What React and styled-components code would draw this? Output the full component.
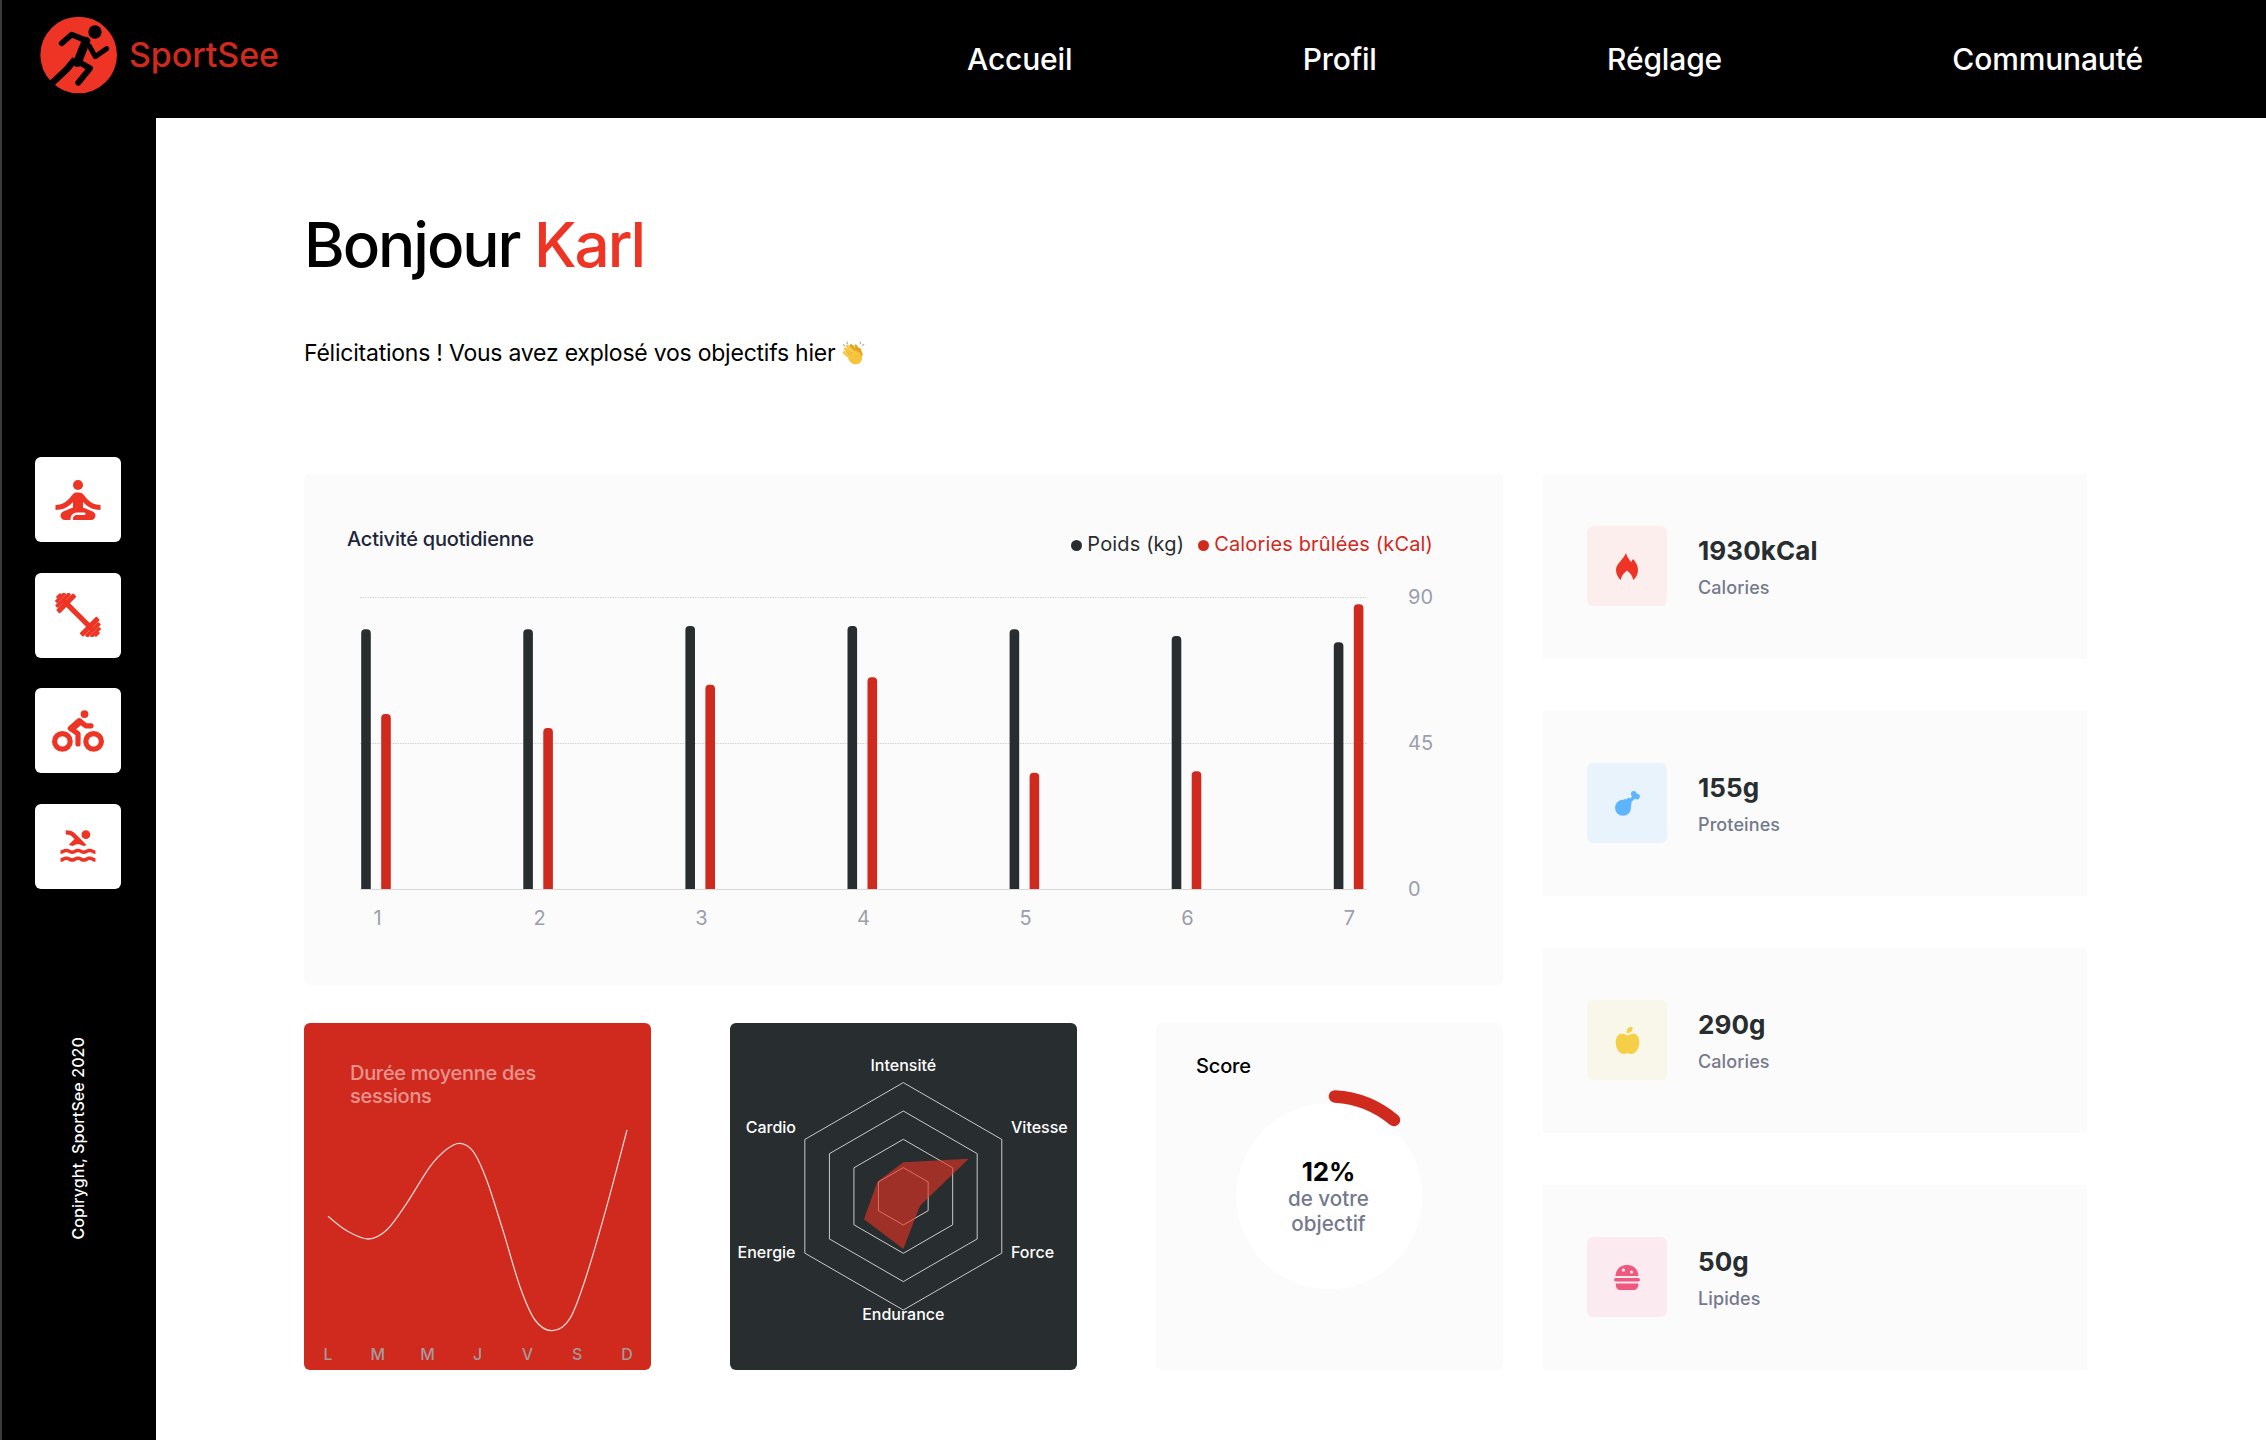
import React from 'react';
import styled, { createGlobalStyle } from 'styled-components';
import { MdSelfImprovement, MdPool } from 'react-icons/md';
import { FaBiking, FaAppleAlt } from 'react-icons/fa';

const Global = createGlobalStyle`
  html, body { margin: 0; padding: 0; background: #fff; }
  body { font-family: Inter, "Liberation Sans", sans-serif; }
  * { box-sizing: border-box; }
`;

const RED = '#D0291D';
const DARK = '#282D30';

const Page = styled.div`
  width: 2266px;
  height: 1440px;
  display: flex;
  flex-direction: column;
  overflow: hidden;
  border-left: 2px solid #3a3a3a;
`;
const TopBar = styled.header`
  height: 118px;
  flex: none;
  background: #000;
  display: flex;
  align-items: center;
  padding: 0 123px 0 38px;
  justify-content: space-between;
`;
const Brand = styled.div`
  display: flex;
  align-items: center;
  gap: 9px;
  margin-top: -7px;
`;
const BrandName = styled.span`
  color: ${RED};
  font-size: 34px;
  font-weight: 500;
  letter-spacing: -0.1px;
  margin-top: -2px;
`;
const Nav = styled.nav`
  width: 1176px;
  display: flex;
  justify-content: space-between;
`;
const NavLink = styled.a`
  color: #fff;
  font-size: 30px;
  font-weight: 500;
  line-height: 36px;
  letter-spacing: -0.15px;
`;
const Body = styled.div`
  flex: 1;
  display: flex;
  min-height: 0;
`;
const SideBar = styled.aside`
  width: 154px;
  flex: none;
  background: #000;
  display: flex;
  flex-direction: column;
  align-items: center;
  padding: 339px 0 0 0;
`;
const SideList = styled.div`
  display: flex;
  flex-direction: column;
  gap: 30.5px;
  margin-left: -2px;
`;
const SideButton = styled.a`
  width: 86px;
  height: 85px;
  border-radius: 6px;
  background: #fff;
  color: #EE3424;
  display: flex;
  align-items: center;
  justify-content: center;
`;
const Copy = styled.div`
  writing-mode: vertical-rl;
  transform: rotate(180deg);
  color: #fff;
  font-size: 16px;
  font-weight: 500;
  line-height: 20px;
  letter-spacing: 0.1px;
  margin-top: 148px;
  margin-left: -2px;
  white-space: nowrap;
`;
const Main = styled.main`
  flex: 1;
  background: #fff;
  padding: 89px 0 0 148px;
`;
const Title = styled.h1`
  margin: 0;
  font-size: 62px;
  font-weight: 500;
  line-height: 76px;
  color: #000;
  letter-spacing: -2.05px;
`;
const Accent = styled.span`
  color: #EE3424;
`;
const Sub = styled.p`
  margin: 55px 0 106px;
  font-size: 23px;
  line-height: 30px;
  font-weight: 400;
  letter-spacing: -0.23px;
  color: #000;
  display: flex;
  align-items: center;
  gap: 6px;
`;
const Dashboard = styled.div`
  display: grid;
  grid-template-columns: 1199px 544px;
  column-gap: 40px;
`;
const LeftCol = styled.div`
  display: flex;
  flex-direction: column;
  gap: 38px;
`;
const ActivityCard = styled.section`
  height: 511px;
  background: #FBFBFB;
  border-radius: 5px;
`;
const ActivityHead = styled.div`
  height: 100px;
  padding: 0 70px 0 43px;
  display: flex;
  justify-content: space-between;
`;
const ActivityTitle = styled.h2`
  margin: 53px 0 0;
  font-size: 20px;
  line-height: 24px;
  font-weight: 500;
  letter-spacing: -0.2px;
  color: #20253A;
`;
const Legend = styled.div`
  margin-top: 58px;
  display: flex;
  gap: 14px;
  height: 24px;
`;
const LegendItem = styled.span`
  display: flex;
  align-items: center;
  gap: 5px;
  font-size: 20px;
  line-height: 24px;
  letter-spacing: 0.15px;
  color: ${p => p.$color};
  &::before {
    content: '';
    width: 11px;
    height: 11px;
    border-radius: 50%;
    background: ${p => p.$color};
    margin-top: 2px;
  }
`;
const ChartSvg = styled.svg`
  display: block;
`;
const Row = styled.div`
  display: grid;
  grid-template-columns: repeat(3, 347px);
  justify-content: space-between;
`;
const Tile = styled.section`
  position: relative;
  height: 347px;
  border-radius: 6px;
  background: ${p => p.$bg};
  overflow: hidden;
`;
const DurationTitle = styled.h3`
  margin: 0;
  padding: 39px 0 0 46px;
  width: 300px;
  font-size: 20px;
  line-height: 23px;
  font-weight: 500;
  letter-spacing: -0.3px;
  color: rgba(255, 255, 255, 0.5);
`;
const OverSvg = styled.svg`
  position: absolute;
  inset: 0;
`;
const Days = styled.div`
  position: absolute;
  left: 0;
  right: 0;
  bottom: 6px;
  padding: 0 12px;
  display: flex;
  justify-content: space-between;
`;
const Day = styled.span`
  width: 24px;
  text-align: center;
  font-size: 16px;
  line-height: 20px;
  font-weight: 500;
  color: #A59A9C;
`;
const ScoreTitle = styled.h3`
  position: relative;
  margin: 0;
  padding: 31px 0 0 40px;
  font-size: 20px;
  line-height: 24px;
  font-weight: 500;
  letter-spacing: -0.15px;
  color: #000;
`;
const ScoreText = styled.div`
  position: absolute;
  left: 0;
  right: 2px;
  top: 133px;
  text-align: center;
`;
const ScoreValue = styled.div`
  font-size: 26px;
  line-height: 32px;
  font-weight: 700;
  letter-spacing: -0.2px;
  color: #000;
`;
const ScoreLabel = styled.div`
  font-size: 20.6px;
  line-height: 24.5px;
  font-weight: 500;
  color: #74798C;
  margin-top: -1px;
`;
const RightCol = styled.div`
  display: flex;
  flex-direction: column;
  gap: 52px;
`;
const Stat = styled.div`
  height: 185px;
  background: #FBFBFB;
  display: flex;
  align-items: flex-start;
  gap: 31px;
  padding: 52px 44px 0;
`;
const StatIcon = styled.div`
  width: 80px;
  height: 80px;
  border-radius: 6px;
  background: ${p => p.$bg};
  color: ${p => p.$color};
  display: flex;
  align-items: center;
  justify-content: center;
`;
const StatBody = styled.div`
  display: flex;
  flex-direction: column;
  gap: 10px;
  margin-top: 9px;
`;
const StatValue = styled.div`
  font-size: 26px;
  line-height: 32px;
  font-weight: 700;
  letter-spacing: 0.1px;
  color: ${DARK};
`;
const StatLabel = styled.div`
  font-size: 18px;
  line-height: 22px;
  font-weight: 500;
  letter-spacing: 0.1px;
  color: #74798C;
`;

const Logo = () => (
  <svg width="80" height="80" viewBox="120 50 240 240">
    <circle cx="236" cy="167" r="115" fill="#EE3424" />
    <circle cx="285" cy="98" r="20" fill="#000" />
    <g fill="none" stroke="#000" strokeLinecap="round" strokeLinejoin="round">
      <path d="M185 132 L215 106 L262 125" strokeWidth="17" />
      <path d="M258 125 L232 190" strokeWidth="26" />
      <path d="M268 140 L286 172 L320 148" strokeWidth="15" />
      <path d="M232 185 L270 207 L235 250" strokeWidth="18" />
      <path strokeLinecap="butt" d="M225 180 L200 210 L145 262" strokeWidth="20" />
    </g>
  </svg>
);

const Barbell = () => (
  <svg width="46" height="44" viewBox="0 0 46 44" fill="currentColor">
    <g transform="translate(23 22) rotate(45)">
      <rect x="-20" y="-2.6" width="40" height="5.2" />
      {[1, -1].map(s => (
        <g key={s} transform={`scale(${s} 1)`}>
          <rect x="14" y="-12" width="5" height="24" rx="1" />
          <rect x="19" y="-9.5" width="4" height="19" rx="1" />
          <rect x="23" y="-6.5" width="3.4" height="13" rx="1" />
          <rect x="26" y="-3" width="2.4" height="6" rx="1" />
        </g>
      ))}
    </g>
  </svg>
);

const Clap = () => (
  <svg width="24" height="24" viewBox="0 0 24 24">
    <g fill="none" stroke="#A8A8A8" strokeWidth="1.1" strokeLinecap="round">
      <path d="M2.5 3.5 L3.6 4.8" /><path d="M6 0.8 L6.4 2.6" /><path d="M19.6 1 L19.2 2.8" /><path d="M22.8 3.4 L21.4 4.4" />
    </g>
    <g fill="none" stroke="#E3A21C" strokeLinecap="round">
      <path d="M10 4.6 L16 11" strokeWidth="3" />
      <path d="M14.6 4.8 L18.6 11" strokeWidth="2.6" />
      <path d="M18.4 8 L20.4 14" strokeWidth="2.6" />
    </g>
    <ellipse cx="14" cy="16.4" rx="7.4" ry="6.6" transform="rotate(40 14 16.4)" fill="#F7C23E" />
    <g fill="none" stroke="#F9C842" strokeLinecap="round">
      <path d="M4.4 8 L11 14.4" strokeWidth="3.1" />
      <path d="M6.6 5.2 L13 12" strokeWidth="3.1" />
      <path d="M3.4 11.6 L9.6 17" strokeWidth="3.1" />
    </g>
    <g fill="none" stroke="#E3A21C" strokeWidth="0.7" strokeLinecap="round">
      <path d="M6.4 8 L11.2 12.8" />
      <path d="M5 10 L9.6 14.4" />
    </g>
  </svg>
);

const Flame = () => (
  <svg width="22" height="27" viewBox="0 0 22 27" fill="currentColor">
    <path d="M10 0 C11 4 13 6 15 9 L17 6 C20 9 22 13 22 17 C22 21 20 25 17 27 C17 23 14 20 11 17.5 C8 20 5 23 5 27 C2 25 0 21 0 17 C0 11 7 7 10 0 Z" />
  </svg>
);

const Drumstick = () => (
  <svg width="25" height="25" viewBox="0 0 25 25" fill="currentColor">
    <circle cx="8" cy="16.8" r="8" />
    <path d="M5 10.5 L10 8 L11.4 8.6 L13 6.6 L15 7.4 L16.6 13 L14 20 Z" />
    <path d="M13 12 L20 5" fill="none" stroke="currentColor" strokeWidth="3.6" />
    <circle cx="18.8" cy="2.9" r="2.8" />
    <circle cx="22" cy="5.6" r="2.8" />
  </svg>
);

const Burger = () => (
  <svg width="26" height="25" viewBox="0 0 26 25">
    <path fill="currentColor" d="M1.6 11 C1.6 4 7 0 13 0 C19 0 24.4 4 24.4 11 Z" />
    <circle cx="9.4" cy="5.2" r="1.6" fill="#FBEAEF" />
    <circle cx="17.6" cy="7" r="1.6" fill="#FBEAEF" />
    <rect fill="currentColor" x="0" y="13" width="26" height="3.6" rx="1.8" />
    <path fill="currentColor" d="M1.8 18.6 H24.2 V20 C24.2 23 22 25 19.6 25 H6.4 C4 25 1.8 23 1.8 20 Z" />
  </svg>
);

const weight = [629.3, 629.3, 626, 626, 629.3, 636, 642.3];
const calories = [714, 728, 684.7, 677.3, 772.7, 771.3, 604.3];
const OX = 304;
const OY = 574;

function topBar(x, top, fill) {
  const b = 889 - OY;
  const t = top - OY;
  const r = 4;
  const w = 9.6;
  return (
    <path
      key={`${x}-${top}`}
      fill={fill}
      d={`M${x} ${b} V${t + r} a${r} ${r} 0 0 1 ${r} ${-r} h${w - 2 * r} a${r} ${r} 0 0 1 ${r} ${r} V${b} Z`}
    />
  );
}

const ActivityChart = () => (
  <ChartSvg width="1199" height="411" viewBox="0 0 1199 411">
    <line x1={360 - OX} x2={1367 - OX} y1={597 - OY + 0.5} y2={597 - OY + 0.5} stroke="#D2D2D2" strokeDasharray="1.5 1" />
    <line x1={360 - OX} x2={1367 - OX} y1={743 - OY + 0.5} y2={743 - OY + 0.5} stroke="#D2D2D2" strokeDasharray="1.5 1" />
    <line x1={360 - OX} x2={1367 - OX} y1={889 - OY + 0.5} y2={889 - OY + 0.5} stroke="#D8D8D8" />
    {weight.map((t, i) => topBar(361.2 + i * 162.1 - OX, t, DARK))}
    {calories.map((t, i) => topBar(381.2 + i * 162.1 - OX, t, RED))}
    <g fontFamily="Inter" fontSize="20" fill="#9B9EAC">
      {[0, 1, 2, 3, 4, 5, 6].map(i => (
        <text key={i} x={377.5 + i * 162 - OX} y={925 - OY} textAnchor="middle">{i + 1}</text>
      ))}
      <text x={1408 - OX} y={604 - OY}>90</text>
      <text x={1408 - OX} y={750 - OY}>45</text>
      <text x={1408 - OX} y={896 - OY}>0</text>
    </g>
  </ChartSvg>
);

const linePts = [
  [114, 619], [170, 662], [235, 687], [290, 660], [350, 580], [420, 470], [470, 418], [510, 400],
  [550, 425], [590, 510], [640, 665], [690, 830], [735, 930], [787, 962], [840, 925], [890, 795],
  [950, 590], [1011, 360],
].map(([x, y]) => [(x - 42) / 3, (y - 39) / 3]);

function spline(p) {
  let d = `M${p[0][0]} ${p[0][1]}`;
  for (let i = 0; i < p.length - 1; i++) {
    const a = p[Math.max(i - 1, 0)];
    const b = p[i];
    const c = p[i + 1];
    const e = p[Math.min(i + 2, p.length - 1)];
    d += ` C${b[0] + (c[0] - a[0]) / 6} ${b[1] + (c[1] - a[1]) / 6} ${c[0] - (e[0] - b[0]) / 6} ${c[1] - (e[1] - b[1]) / 6} ${c[0]} ${c[1]}`;
  }
  return d;
}

const RCX = 173.3;
const RCY = 173.3;
function hex(r) {
  return [0, 1, 2, 3, 4, 5]
    .map(i => {
      const a = (i * Math.PI) / 3;
      return `${RCX + r * Math.sin(a)},${RCY - r * Math.cos(a)}`;
    })
    .join(' ');
}
const shape = [[550, 457], [746, 446], [600, 587], [550, 717], [432, 628], [472, 515]]
  .map(([x, y]) => `${(x - 30) / 3},${(y - 39) / 3}`)
  .join(' ');

const Radar = () => (
  <OverSvg width="347" height="347" viewBox="0 0 347 347">
    {[113.7, 85.3, 57, 28.7].map(r => (
      <polygon key={r} points={hex(r)} fill="none" stroke="#fff" strokeOpacity="0.75" strokeWidth="1" />
    ))}
    <polygon points={shape} fill="#ED3223" fillOpacity="0.6" />
    <g fontFamily="Inter" fontSize="16" fontWeight="500" fill="#fff">
      <text x={RCX} y="48" textAnchor="middle">Intensité</text>
      <text x="281" y="110">Vitesse</text>
      <text x="281" y="235">Force</text>
      <text x={RCX} y="297" textAnchor="middle">Endurance</text>
      <text x="65.5" y="235" textAnchor="end">Energie</text>
      <text x="66" y="110" textAnchor="end">Cardio</text>
    </g>
  </OverSvg>
);

function polar(cx, cy, r, deg) {
  const a = (deg * Math.PI) / 180;
  return [cx + r * Math.sin(a), cy - r * Math.cos(a)];
}
const [ax, ay] = polar(173.3, 173.3, 100, 3.2);
const [bx, by] = polar(173.3, 173.3, 100, 40.3);

const ScoreRing = () => (
  <OverSvg width="347" height="347" viewBox="0 0 347 347">
    <circle cx="173.3" cy="173.3" r="93" fill="#fff" />
    <path d={`M${ax} ${ay} A100 100 0 0 1 ${bx} ${by}`} fill="none" stroke={RED} strokeWidth="12.5" strokeLinecap="round" />
  </OverSvg>
);

const days = ['L', 'M', 'M', 'J', 'V', 'S', 'D'];

export default function App() {
  return (
    <>
      <Global />
      <Page>
        <TopBar>
          <Brand>
            <Logo />
            <BrandName>SportSee</BrandName>
          </Brand>
          <Nav>
            <NavLink>Accueil</NavLink>
            <NavLink>Profil</NavLink>
            <NavLink>Réglage</NavLink>
            <NavLink>Communauté</NavLink>
          </Nav>
        </TopBar>
        <Body>
          <SideBar>
            <SideList>
              <SideButton><MdSelfImprovement size={60} /></SideButton>
              <SideButton><Barbell /></SideButton>
              <SideButton><FaBiking size={52} /></SideButton>
              <SideButton><MdPool size={42} /></SideButton>
            </SideList>
            <Copy>Copiryght, SportSee 2020</Copy>
          </SideBar>
          <Main>
            <Title>Bonjour <Accent>Karl</Accent></Title>
            <Sub>Félicitations ! Vous avez explosé vos objectifs hier <Clap /></Sub>
            <Dashboard>
              <LeftCol>
                <ActivityCard>
                  <ActivityHead>
                    <ActivityTitle>Activité quotidienne</ActivityTitle>
                    <Legend>
                      <LegendItem $color={DARK}>Poids (kg)</LegendItem>
                      <LegendItem $color={RED}>Calories brûlées (kCal)</LegendItem>
                    </Legend>
                  </ActivityHead>
                  <ActivityChart />
                </ActivityCard>
                <Row>
                  <Tile $bg={RED}>
                    <DurationTitle>Durée moyenne des<br />sessions</DurationTitle>
                    <OverSvg width="347" height="347" viewBox="0 0 347 347">
                      <path d={spline(linePts)} fill="none" stroke="#fff" strokeOpacity="0.8" strokeWidth="1.3" />
                    </OverSvg>
                    <Days>{days.map((d, i) => <Day key={i}>{d}</Day>)}</Days>
                  </Tile>
                  <Tile $bg={DARK}>
                    <Radar />
                  </Tile>
                  <Tile $bg="#FBFBFB">
                    <ScoreRing />
                    <ScoreTitle>Score</ScoreTitle>
                    <ScoreText>
                      <ScoreValue>12%</ScoreValue>
                      <ScoreLabel>de votre<br />objectif</ScoreLabel>
                    </ScoreText>
                  </Tile>
                </Row>
              </LeftCol>
              <RightCol>
                <Stat>
                  <StatIcon $bg="#FBEEEC" $color="#EE3424"><Flame /></StatIcon>
                  <StatBody><StatValue>1930kCal</StatValue><StatLabel>Calories</StatLabel></StatBody>
                </Stat>
                <Stat>
                  <StatIcon $bg="#E9F3FB" $color="#5EB5FF"><Drumstick /></StatIcon>
                  <StatBody><StatValue>155g</StatValue><StatLabel>Proteines</StatLabel></StatBody>
                </Stat>
                <Stat>
                  <StatIcon $bg="#F9F6EA" $color="#F5CF45"><FaAppleAlt size={27} /></StatIcon>
                  <StatBody><StatValue>290g</StatValue><StatLabel>Calories</StatLabel></StatBody>
                </Stat>
                <Stat>
                  <StatIcon $bg="#FBEAEF" $color="#F0597F"><Burger /></StatIcon>
                  <StatBody><StatValue>50g</StatValue><StatLabel>Lipides</StatLabel></StatBody>
                </Stat>
              </RightCol>
            </Dashboard>
          </Main>
        </Body>
      </Page>
    </>
  );
}
